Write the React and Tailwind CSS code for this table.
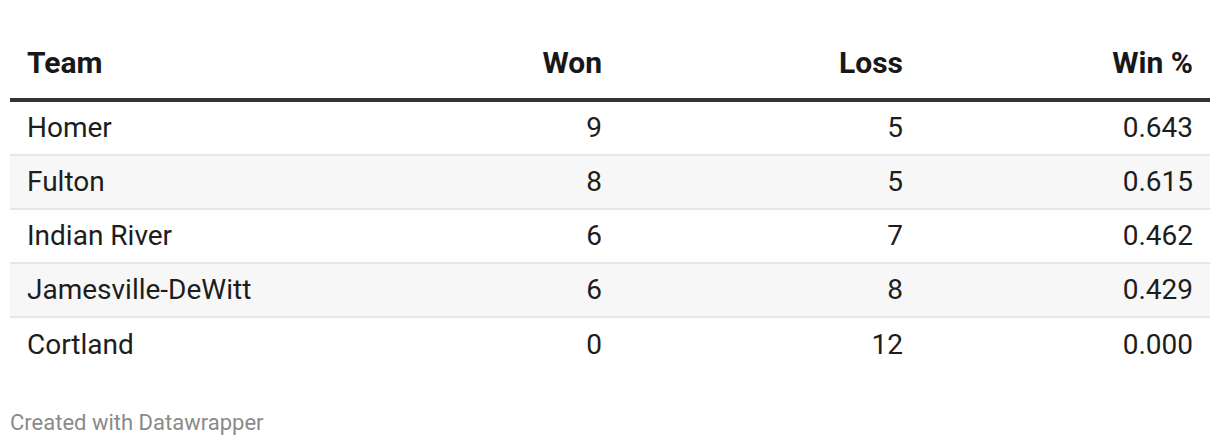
const rows = [
  { team: 'Homer', won: 9, loss: 5, pct: '0.643' },
  { team: 'Fulton', won: 8, loss: 5, pct: '0.615' },
  { team: 'Indian River', won: 6, loss: 7, pct: '0.462' },
  { team: 'Jamesville-DeWitt', won: 6, loss: 8, pct: '0.429' },
  { team: 'Cortland', won: 0, loss: 12, pct: '0.000' },
];

const cols = 'grid grid-cols-[309px_300px_301px_290px]';

export default function App() {
  return (
    <div className="w-[1220px] h-[446px] bg-white px-[10px] pt-[44px] font-['Roboto',sans-serif] text-[#1d1d1d]">
      {/* Header */}
      <div className={`${cols} border-b-4 border-[#333333] pb-[16px] text-[30px] font-bold leading-[38px] text-[#181818]`}>
        <div className="pl-[17px]">Team</div>
        <div className="pr-[17px] text-right">Won</div>
        <div className="pr-[17px] text-right">Loss</div>
        <div className="pr-[17px] text-right">Win %</div>
      </div>

      {/* Body */}
      {rows.map((r, i) => (
        <div
          key={r.team}
          className={`${cols} h-[54px] items-center text-[28px] leading-[36px] ${i % 2 === 1 ? 'bg-[#f7f7f7]' : 'bg-white'} ${i < rows.length - 1 ? 'border-b-2 border-[#e6e6e6]' : ''}`}
        >
          <div className="pl-[17px]">{r.team}</div>
          <div className="pr-[17px] text-right">{r.won}</div>
          <div className="pr-[17px] text-right">{r.loss}</div>
          <div className="pr-[17px] text-right">{r.pct}</div>
        </div>
      ))}

      <div className="mt-[37px] text-[22px] leading-[28px] text-[#8a8a8a]">Created with Datawrapper</div>
    </div>
  );
}
